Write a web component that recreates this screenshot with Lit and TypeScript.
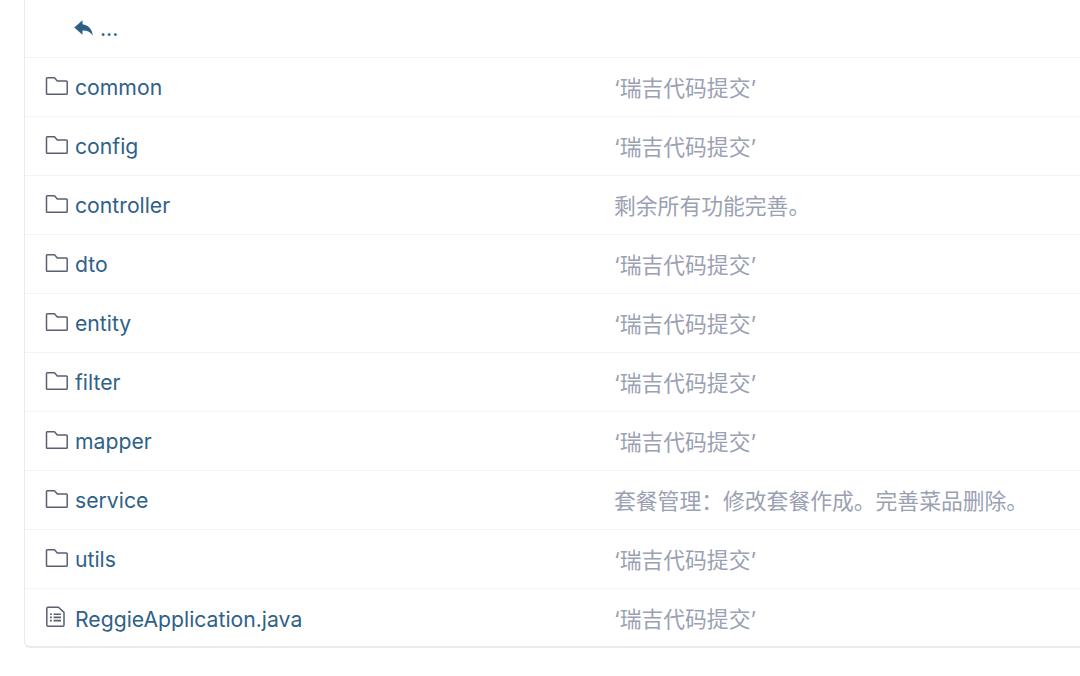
import { LitElement, html, css, svg } from "lit";
import { customElement } from "lit/decorators.js";

const Q = "‘瑞吉代码提交’";
const rows: [string, string, boolean][] = [
  ["common", Q, true],
  ["config", Q, true],
  ["controller", "剩余所有功能完善。", true],
  ["dto", Q, true],
  ["entity", Q, true],
  ["filter", Q, true],
  ["mapper", Q, true],
  ["service", "套餐管理：修改套餐作成。完善菜品删除。", true],
  ["utils", Q, true],
  ["ReggieApplication.java", Q, false],
];

const folder = svg`<svg class="ico" width="24" height="20" viewBox="0 0 24 20"><path d="M2.300 1.800h7.200l2.800 3.100h9.100c.5 0 .8.300.8.800v11.700c0 .5-.3.8-.8.800H2.300c-.5 0-.8-.3-.8-.8V2.600c0-.5.3-.8.8-.8z" fill="none" stroke="#5a6072" stroke-width="1.500" stroke-linejoin="round"/></svg>`;
const file = svg`<svg class="ico" width="24" height="22" viewBox="0 0 24 22"><path d="M3 1.200h10.500L19 6.400V19c0 .7-.5 1.200-1.200 1.200H3c-.7 0-1.200-.5-1.200-1.200V2.400c0-.7.5-1.200 1.200-1.200z" fill="none" stroke="#5a6072" stroke-width="1.500" stroke-linejoin="round"/><path d="M5 8.200h1.800M5 11.400h1.800M5 14.600h1.800M8.600 8.200H16M8.600 11.400H16M8.600 14.600H16" stroke="#5a6072" stroke-width="1.600" fill="none"/></svg>`;
const back = svg`<svg class="back" width="20" height="18" viewBox="0 0 20 18"><path d="M8.500 0.300 0.300 7.500l8.200 7.200V10.500c4.500 0 7.700 1.200 10.300 5.200-.4-6.500-4.600-10.800-10.300-11.500z" fill="#2c5f86"/></svg>`;

@customElement("app-root")
export class AppRoot extends LitElement {
  static styles = css`
    :host {
      display: block;
      width: 1080px;
      height: 676px;
      background: #fff;
      overflow: hidden;
      font-family: Inter, "Noto Sans CJK SC", sans-serif;
      font-size: 21.2px;
    }
    .table {
      margin-left: 24px;
      width: 1080px;
      height: 648px;
      box-sizing: border-box;
      border-left: 1.5px solid #e8ebf1;
      border-bottom: 2px solid #e6e9ee;
      border-bottom-left-radius: 6px;
    }
    .row {
      height: 59px;
      box-sizing: border-box;
      border-bottom: 1.5px solid #f2f4f6;
      display: grid;
      grid-template-columns: 589px 1fr;
      align-items: center;
    }
    .row:first-child {
      height: 58px;
    }
    .row:last-child {
      border-bottom: none;
    }
    .name {
      display: flex;
      align-items: center;
      gap: 6px;
      padding-left: 20px;
      color: #2f6188;
    }
    .up {
      padding-left: 49px;
      padding-bottom: 2px;
      display: flex;
      align-items: center;
      color: #2f6188;
      gap: 6px;
    }
    .ico { flex: none; margin-top: -3px; }
    .back { margin-top: 2px; }
    .msg {
      color: #9aa1b3;
      font-size: 21.8px;
      white-space: nowrap;
      margin-top: -2px;
    }
  `;
  render() {
    return html`<div class="table">
      <div class="row"><div class="up">${back}<span>...</span></div></div>
      ${rows.map(
        ([n, m, d]) => html`<div class="row">
          <div class="name">${d ? folder : file}<span>${n}</span></div>
          <div class="msg">${m}</div>
        </div>`
      )}
    </div>`;
  }
}
